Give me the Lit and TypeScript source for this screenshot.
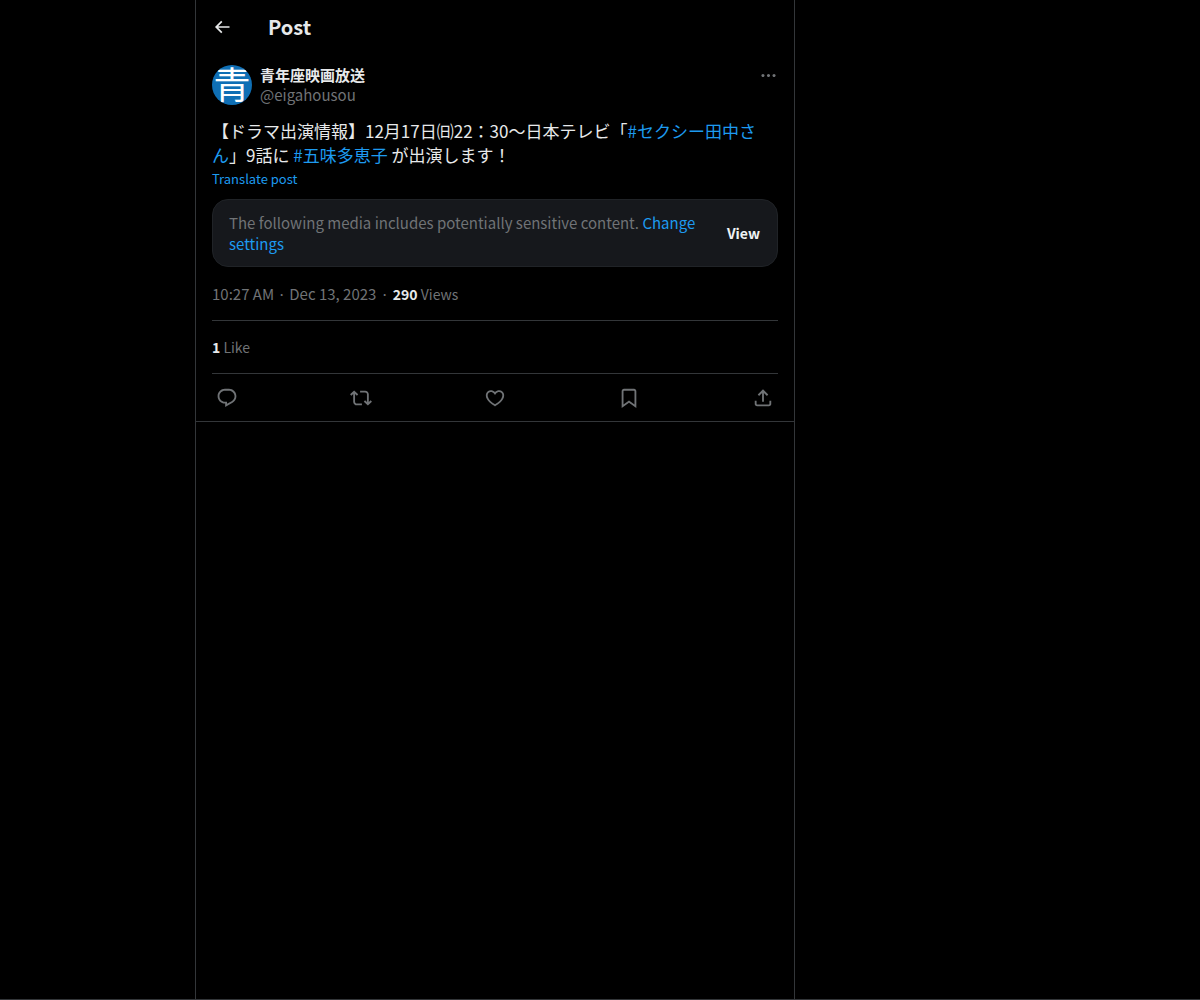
import { LitElement, html, css, svg } from "lit";
import { customElement, property } from "lit/decorators.js";

const icons: Record<string, string> = {
  back: "M7.414 13l5.043 5.04-1.414 1.42L3.586 12l7.457-7.46 1.414 1.42L7.414 11H21v2H7.414z",
  more: "M3 12c0-1.1.9-2 2-2s2 .9 2 2-.9 2-2 2-2-.9-2-2zm9 2c1.1 0 2-.9 2-2s-.9-2-2-2-2 .9-2 2 .9 2 2 2zm7 0c1.1 0 2-.9 2-2s-.9-2-2-2-2 .9-2 2 .9 2 2 2z",
  reply:
    "M1.751 10c0-4.42 3.584-8 8.005-8h4.366c4.49 0 8.129 3.64 8.129 8.13 0 2.96-1.607 5.68-4.196 7.11l-8.054 4.46v-3.69h-.067c-4.49.1-8.183-3.51-8.183-8.01zm8.005-6c-3.317 0-6.005 2.69-6.005 6 0 3.37 2.77 6.08 6.138 6.01l.351-.01h1.761v2.3l5.087-2.81c1.951-1.08 3.163-3.13 3.163-5.36 0-3.39-2.744-6.13-6.129-6.13H9.756z",
  repost:
    "M4.5 3.88l4.432 4.14-1.364 1.46L5.5 7.55V16c0 1.1.896 2 2 2H13v2H7.5c-2.209 0-4-1.79-4-4V7.55L1.432 9.48.068 8.02 4.5 3.88zM16.5 6H11V4h5.5c2.209 0 4 1.79 4 4v8.45l2.068-1.93 1.364 1.46-4.432 4.14-4.432-4.14 1.364-1.46 2.068 1.93V8c0-1.1-.896-2-2-2z",
  like: "M16.697 5.5c-1.222-.06-2.679.51-3.89 2.16l-.805 1.09-.806-1.09C9.984 6.01 8.526 5.44 7.304 5.5c-1.243.07-2.349.78-2.91 1.91-.552 1.12-.633 2.78.479 4.82 1.074 1.97 3.257 4.27 7.129 6.61 3.87-2.34 6.052-4.64 7.126-6.61 1.111-2.04 1.03-3.7.477-4.82-.561-1.13-1.666-1.84-2.908-1.91zm4.187 7.69c-1.351 2.48-4.001 5.12-8.379 7.67l-.503.3-.504-.3c-4.379-2.55-7.029-5.19-8.382-7.67-1.36-2.5-1.41-4.86-.514-6.67.887-1.79 2.647-2.91 4.601-3.01 1.651-.09 3.368.56 4.798 2.01 1.429-1.45 3.146-2.1 4.796-2.01 1.954.1 3.714 1.22 4.601 3.01.896 1.81.846 4.17-.514 6.67z",
  bookmark:
    "M4 4.5C4 3.12 5.119 2 6.5 2h11C18.881 2 20 3.12 20 4.5v18.44l-8-5.71-8 5.71V4.5zM6.5 4c-.276 0-.5.22-.5.5v14.56l6-4.29 6 4.29V4.5c0-.28-.224-.5-.5-.5h-11z",
  share:
    "M12 2.59l5.7 5.7-1.41 1.42L13 6.41V16h-2V6.41l-3.3 3.3-1.41-1.42L12 2.59zM21 15l-.02 3.51c0 1.38-1.12 2.49-2.5 2.49H5.5C4.11 21 3 19.88 3 18.5V15h2v3.5c0 .28.22.5.5.5h12.98c.28 0 .5-.22.5-.5L19 15h2z",
};

@customElement("icon-button")
class IconButton extends LitElement {
  @property() icon = "";
  @property() label = "";

  static styles = css`
    :host {
      display: flex;
    }
    .button {
      display: flex;
      align-items: center;
      justify-content: center;
      width: var(--button-size, 30px);
      height: var(--button-size, 30px);
      padding: 0;
      border: 0;
      border-radius: 50%;
      background: none;
      color: inherit;
      cursor: pointer;
    }
    .glyph {
      width: var(--glyph-size, 22px);
      height: var(--glyph-size, 22px);
      fill: currentColor;
    }
  `;

  render() {
    return html`<button class="button" type="button" aria-label=${this.label}>
      <svg class="glyph" viewBox="0 0 24 24" aria-hidden="true">${svg`<path d=${icons[this.icon]} />`}</svg>
    </button>`;
  }
}

@customElement("app-root")
class AppRoot extends LitElement {
  static styles = css`
    :host {
      display: block;
      background: #000;
      color: #e7e9ea;
      font-family: "Noto Sans CJK JP", "Noto Sans", sans-serif;
      font-size: 15px;
      line-height: 20px;
    }
    .page {
      box-sizing: border-box;
      display: grid;
      grid-template-columns: minmax(0, 13fr) minmax(0, 600px) minmax(0, 27fr);
      min-height: 100vh;
      border-bottom: 1px solid #333639;
    }
    .column {
      grid-column: 2;
      border: solid #333639;
      border-width: 0 1px;
    }
    .bar {
      display: flex;
      align-items: center;
      gap: 28px;
      height: 53px;
      padding: 0 8px;
    }
    .back {
      --button-size: 36px;
      --glyph-size: 20px;
    }
    .title {
      margin: 0;
      font-size: 20px;
      line-height: 24px;
      font-weight: 700;
    }
    .post {
      padding: 12px 16px 0;
      border-bottom: 1px solid #333639;
    }
    .author {
      display: flex;
      gap: 8px;
    }
    .avatar {
      display: flex;
      justify-content: center;
      flex: none;
      width: 40px;
      height: 40px;
      border-radius: 50%;
      overflow: hidden;
      background: #0f6fb5;
      color: #fff;
      font-size: 37px;
      line-height: 37px;
      text-decoration: none;
    }
    .names {
      display: flex;
      flex-direction: column;
      flex: 1;
    }
    .name {
      color: inherit;
      font-weight: 700;
      text-decoration: none;
    }
    .handle {
      color: #707376;
      text-decoration: none;
    }
    .more {
      height: 20px;
      align-items: center;
      margin-right: -5px;
      color: #707376;
      --glyph-size: 19px;
    }
    .text {
      margin: 14px 0 0;
      font-size: 17px;
      line-height: 24px;
    }
    .link {
      color: #1d9bf0;
      text-decoration: none;
    }
    .translate {
      display: block;
      width: max-content;
      padding: 0;
      border: 0;
      background: none;
      color: #1d9bf0;
      font: inherit;
      font-size: 13px;
      line-height: 24px;
      cursor: pointer;
    }
    .notice {
      display: flex;
      align-items: center;
      gap: 24px;
      margin-top: 8px;
      padding: 12px 16px;
      border: 1px solid #202327;
      border-radius: 16px;
      background: #16181c;
    }
    .notice-text {
      flex: 1;
      margin: 0;
      line-height: 21px;
      color: #707376;
    }
    .view {
      padding: 0 1px;
      border: 0;
      background: none;
      color: #eff3f4;
      font: inherit;
      font-size: 14px;
      font-weight: 700;
      cursor: pointer;
    }
    .meta,
    .stats {
      display: flex;
      gap: 4px;
      padding: 16px 0;
      border-bottom: 1px solid #333639;
      color: #707376;
    }
    .meta {
      padding-top: 17px;
    }
    .figure {
      font-size: 14px;
    }
    .count {
      color: #e7e9ea;
      font-weight: 700;
    }
    .actions {
      display: flex;
      align-items: center;
      justify-content: space-between;
      height: 47px;
      color: #707376;
    }
  `;

  private actions = [
    ["reply", "Reply"],
    ["repost", "Repost"],
    ["like", "Like"],
    ["bookmark", "Bookmark"],
    ["share", "Share post"],
  ];

  render() {
    return html`
      <div class="page">
        <main class="column">
          <header class="bar">
            <icon-button class="back" icon="back" label="Back"></icon-button>
            <h1 class="title">Post</h1>
          </header>
          <article class="post" lang="ja">
            <div class="author">
              <a class="avatar" href="#profile">青</a>
              <div class="names">
                <a class="name" href="#profile">青年座映画放送</a>
                <a class="handle" href="#profile">@eigahousou</a>
              </div>
              <icon-button class="more" icon="more" label="More"></icon-button>
            </div>
            <p class="text">【ドラマ出演情報】12月17日㈰22：30〜日本テレビ「<a class="link" href="#tag">#セクシー田中さん</a>」9話に <a class="link" href="#tag">#五味多恵子</a> が出演します！</p>
            <button class="translate" type="button">Translate post</button>
            <section class="notice" lang="en">
              <p class="notice-text">
                The following media includes potentially sensitive content.
                <a class="link" href="#settings">Change settings</a>
              </p>
              <button class="view" type="button">View</button>
            </section>
            <div class="meta" lang="en">
              <time datetime="2023-12-13T10:27">10:27 AM · Dec 13, 2023</time>
              <span>·</span>
              <span class="figure"><span class="count">290</span> Views</span>
            </div>
            <div class="stats" lang="en">
              <span class="figure"><span class="count">1</span> Like</span>
            </div>
            <div class="actions">
              ${this.actions.map(([icon, label]) => html`<icon-button icon=${icon} label=${label}></icon-button>`)}
            </div>
          </article>
        </main>
      </div>
    `;
  }
}
